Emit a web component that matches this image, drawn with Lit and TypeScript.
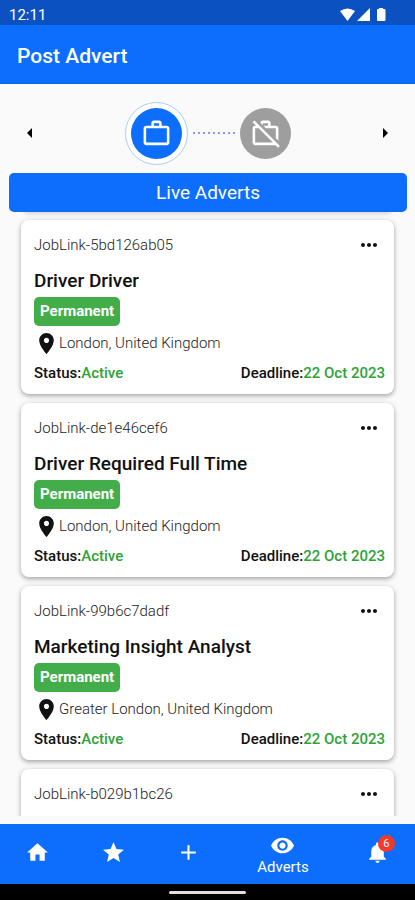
import { LitElement, html, css, svg, nothing } from "lit";
import { customElement, property } from "lit/decorators.js";
import { classMap } from "lit/directives/class-map.js";

interface AdvertDetails {
  title: string;
  type: string;
  location: string;
  status: string;
  deadline: string;
}

interface Advert {
  id: string;
  details?: AdvertDetails;
}

const adverts: Advert[] = [
  { id: "JobLink-5bd126ab05", details: { title: "Driver Driver", type: "Permanent", location: "London, United Kingdom", status: "Active", deadline: "22 Oct 2023" } },
  { id: "JobLink-de1e46cef6", details: { title: "Driver Required Full Time", type: "Permanent", location: "London, United Kingdom", status: "Active", deadline: "22 Oct 2023" } },
  { id: "JobLink-99b6c7dadf", details: { title: "Marketing Insight Analyst", type: "Permanent", location: "Greater London, United Kingdom", status: "Active", deadline: "22 Oct 2023" } },
  { id: "JobLink-b029b1bc26" },
];

const paths = {
  work: "M14 6V4h-4v2h4zM4 8v11h16V8H4zm16-2c1.11 0 2 .89 2 2v11c0 1.11-.89 2-2 2H4c-1.11 0-2-.89-2-2l.01-11c0-1.11.88-2 1.99-2h4V4c0-1.11.89-2 2-2h4c1.11 0 2 .89 2 2v2h4z",
  workOff: "M10 4h4v2h-3.6l2 2H20v7.600l2 2V8c0-1.110-.89-2-2-2h-4V4c0-1.110-.89-2-2-2h-4c-.99 0-1.800.700-1.960 1.640L10 5.600V4zM3.400 1.840L1.990 3.250 4.740 6H4c-1.110 0-1.990.89-1.990 2L2 19c0 1.110.89 2 2 2h15.740l2 2 1.410-1.410L3.400 1.840zM4 19V8h2.740l11 11H4z",
  pin: "M12 2C8.130 2 5 5.130 5 9c0 5.250 7 13 7 13s7-7.750 7-13c0-3.870-3.130-7-7-7zm0 9.500c-1.380 0-2.500-1.120-2.500-2.500s1.120-2.500 2.500-2.500 2.500 1.120 2.500 2.500-1.120 2.500-2.500 2.500z",
  more: "M6 10c-1.100 0-2 .9-2 2s.9 2 2 2 2-.9 2-2-.9-2-2-2zm12 0c-1.100 0-2 .9-2 2s.9 2 2 2 2-.9 2-2-.9-2-2-2zm-6 0c-1.100 0-2 .9-2 2s.9 2 2 2 2-.9 2-2-.9-2-2-2z",
  left: "M14 7l-5 5 5 5V7z",
  right: "M10 17l5-5-5-5v10z",
  home: "M10 20v-6h4v6h5v-8h3L12 3 2 12h3v8z",
  star: "M12 17.270L18.180 21l-1.640-7.030L22 9.240l-7.190-.61L12 2 9.190 8.630 2 9.240l5.460 4.730L5.820 21z",
  add: "M19 13h-6v6h-2v-6H5v-2h6V5h2v6h6v2z",
  eye: "M12 4.500C7 4.500 2.730 7.610 1 12c1.730 4.390 6 7.500 11 7.500s9.270-3.110 11-7.500c-1.730-4.390-6-7.500-11-7.500zM12 17c-2.760 0-5-2.240-5-5s2.240-5 5-5 5 2.240 5 5-2.240 5-5 5zm0-8c-1.660 0-3 1.340-3 3s1.340 3 3 3 3-1.340 3-3-1.340-3-3-3z",
  bell: "M12 22c1.100 0 2-.9 2-2h-4c0 1.100.89 2 2 2zm6-6v-5c0-3.070-1.640-5.640-4.500-6.320V4c0-.83-.67-1.500-1.500-1.500s-1.500.67-1.500 1.500v.68C7.630 5.360 6 7.920 6 11v5l-2 2v1h16v-1l-2-2z",
};

const icon = (name: keyof typeof paths, cls = "") =>
  html`<svg class="icon ${cls}" viewBox="0 0 24 24" aria-hidden="true">${svg`<path d=${paths[name]} />`}</svg>`;

const iconStyles = css`
  .icon { display: block; width: 24px; height: 24px; fill: currentColor; flex: none; }
  button { font: inherit; color: inherit; background: none; border: 0; padding: 0; margin: 0; cursor: pointer; }
`;

@customElement("advert-card")
export class AdvertCard extends LitElement {
  @property({ attribute: false }) advert!: Advert;

  static styles = [
    iconStyles,
    css`
      :host {
        display: block;
        flex: none;
        box-sizing: border-box;
        min-height: 174px;
        background: #fff;
        border-radius: 8px;
        padding: 4px 9px 8px 13px;
        box-shadow: 0 2px 4px rgba(0, 0, 0, 0.26), 0 1px 6px rgba(0, 0, 0, 0.12);
        color: #111;
        font-size: 15px;
      }
      .row { display: flex; align-items: center; justify-content: space-between; }
      .top { height: 41px; padding-right: 4px; }
      .id, .location { font-weight: 300; color: #222; }
      .title { margin: 0; font-size: 19px; line-height: 32px; font-weight: 500; }
      .badge {
        display: inline-block;
        vertical-align: top;
        background: #42ad49;
        color: #fff;
        border-radius: 5px;
        padding: 0 6px;
        line-height: 29px;
        font-weight: 700;
      }
      .place { display: flex; align-items: center; height: 34px; }
      .pin { width: 25px; height: 25px; }
      .foot { height: 26px; font-weight: 500; }
      .value { color: #2da336; }
    `,
  ];

  render() {
    const { id, details: d } = this.advert;
    return html`
      <div class="row top">
        <span class="id">${id}</span>
        <button aria-label="More options">${icon("more")}</button>
      </div>
      ${d
        ? html`
            <h2 class="title">${d.title}</h2>
            <span class="badge">${d.type}</span>
            <div class="place">${icon("pin", "pin")}<span class="location">${d.location}</span></div>
            <div class="row foot">
              <span>Status:<span class="value">${d.status}</span></span>
              <span>Deadline:<span class="value">${d.deadline}</span></span>
            </div>
          `
        : nothing}
    `;
  }
}

@customElement("app-root")
export class AppRoot extends LitElement {
  static styles = [
    iconStyles,
    css`
      :host {
        display: flex;
        flex-direction: column;
        height: 100vh;
        background: #fafafa;
        font-family: Roboto, "Liberation Sans", sans-serif;
        overflow: hidden;
      }
      .status {
        display: flex;
        align-items: center;
        justify-content: space-between;
        flex: none;
        height: 25px;
        padding: 4px 28px 0 9px;
        box-sizing: border-box;
        background: #0b52c0;
        color: #fff;
        font-size: 15px;
      }
      .signals { display: block; width: 48px; height: 16px; fill: #fff; }
      .bar { flex: none; background: #0d6efd; border-bottom: 1px solid #0b5ff0; padding: 0 17px; }
      .heading { margin: 0; color: #fff; font-size: 21px; line-height: 62px; height: 58px; font-weight: 500; }
      .stepper { display: flex; align-items: center; flex: none; height: 89px; padding: 9px 18px 0; box-sizing: border-box; justify-content: space-between; }
      .steps { display: flex; align-items: center; gap: 3px; }
      .ring { border: 1px solid #a9cdf9; border-radius: 50%; padding: 5px; background: #fff; }
      .step { display: flex; align-items: center; justify-content: center; width: 51px; height: 51px; border-radius: 50%; background: #9e9e9e; color: #fff; }
      .step.on { background: #0d6efd; }
      .step .icon { width: 31px; height: 31px; }
      .dots { width: 46px; height: 2px; fill: #7c9cf5; }
      .live {
        flex: none;
        margin: 0 8px 0 9px;
        border-radius: 5px;
        background: #0d6efd;
        color: #fff;
        font-size: 19px;
        line-height: 39px;
        text-align: center;
      }
      .list { flex: 1; min-height: 0; overflow: hidden; display: flex; flex-direction: column; gap: 9px; padding: 8px 21px 0; margin-bottom: 8px; }
      .lead { flex: none; height: 8px; margin: -17px 3px 0; border-radius: 8px; box-shadow: 0 2px 5px rgba(0, 0, 0, 0.22); }
      .nav { display: flex; flex: none; height: 60px; background: #0d6efd; color: #fff; }
      .tab { flex: 2; display: flex; flex-direction: column; align-items: center; justify-content: center; padding-bottom: 3px; }
      .tab.on { flex: 3; padding-bottom: 0; }
      .tab .icon { width: 25px; height: 25px; }
      .label { font-size: 15px; line-height: 18px; }
      .alert { position: relative; }
      .count {
        position: absolute;
        top: -5px;
        right: -5px;
        width: 17px;
        height: 17px;
        border-radius: 50%;
        background: #f03a2c;
        font-size: 11px;
        line-height: 17px;
        text-align: center;
      }
      .gesture { flex: none; height: 16px; background: #000; display: flex; align-items: center; justify-content: center; }
      .pill { width: 77px; height: 3px; border-radius: 2px; background: #e6dede; }
    `,
  ];

  private tab(name: keyof typeof paths, label: string, on = false, count = 0) {
    return html`
      <button class=${classMap({ tab: true, on })} aria-label=${label}>
        <span class="alert">${icon(name)}${count ? html`<span class="count">${count}</span>` : nothing}</span>
        ${on ? html`<span class="label">${label}</span>` : nothing}
      </button>
    `;
  }

  render() {
    return html`
      <div class="status">
        <span>12:11</span>
        <svg class="signals" viewBox="0 0 48 16" aria-hidden="true">
          <path d="M1 4Q8.500 -1 16 4L8.500 14Z" />
          <path d="M31 1V14H18Z" />
          <path d="M38 3Q38 2 39 2H40V1H44V2H45.500Q46.500 2 46.500 3V13Q46.500 14 45.500 14H39Q38 14 38 13Z" />
        </svg>
      </div>
      <header class="bar"><h1 class="heading">Post Advert</h1></header>
      <div class="stepper">
        <button aria-label="Previous">${icon("left")}</button>
        <div class="steps">
          <div class="ring"><button class="step on" aria-label="Live adverts">${icon("work")}</button></div>
          <svg class="dots" viewBox="0 0 46 2" aria-hidden="true">
            ${[0, 1, 2, 3, 4, 5, 6, 7, 8].map((i) => svg`<rect x=${i * 5 + 2} width="2" height="2" />`)}
          </svg>
          <button class="step" aria-label="Closed adverts">${icon("workOff")}</button>
        </div>
        <button aria-label="Next">${icon("right")}</button>
      </div>
      <button class="live">Live Adverts</button>
      <main class="list">
        <div class="lead"></div>
        ${adverts.map((a) => html`<advert-card .advert=${a}></advert-card>`)}
      </main>
      <nav class="nav">
        ${this.tab("home", "Home")}
        ${this.tab("star", "Favourites")}
        ${this.tab("add", "Add")}
        ${this.tab("eye", "Adverts", true)}
        ${this.tab("bell", "Notifications", false, 6)}
      </nav>
      <div class="gesture"><div class="pill"></div></div>
    `;
  }
}
